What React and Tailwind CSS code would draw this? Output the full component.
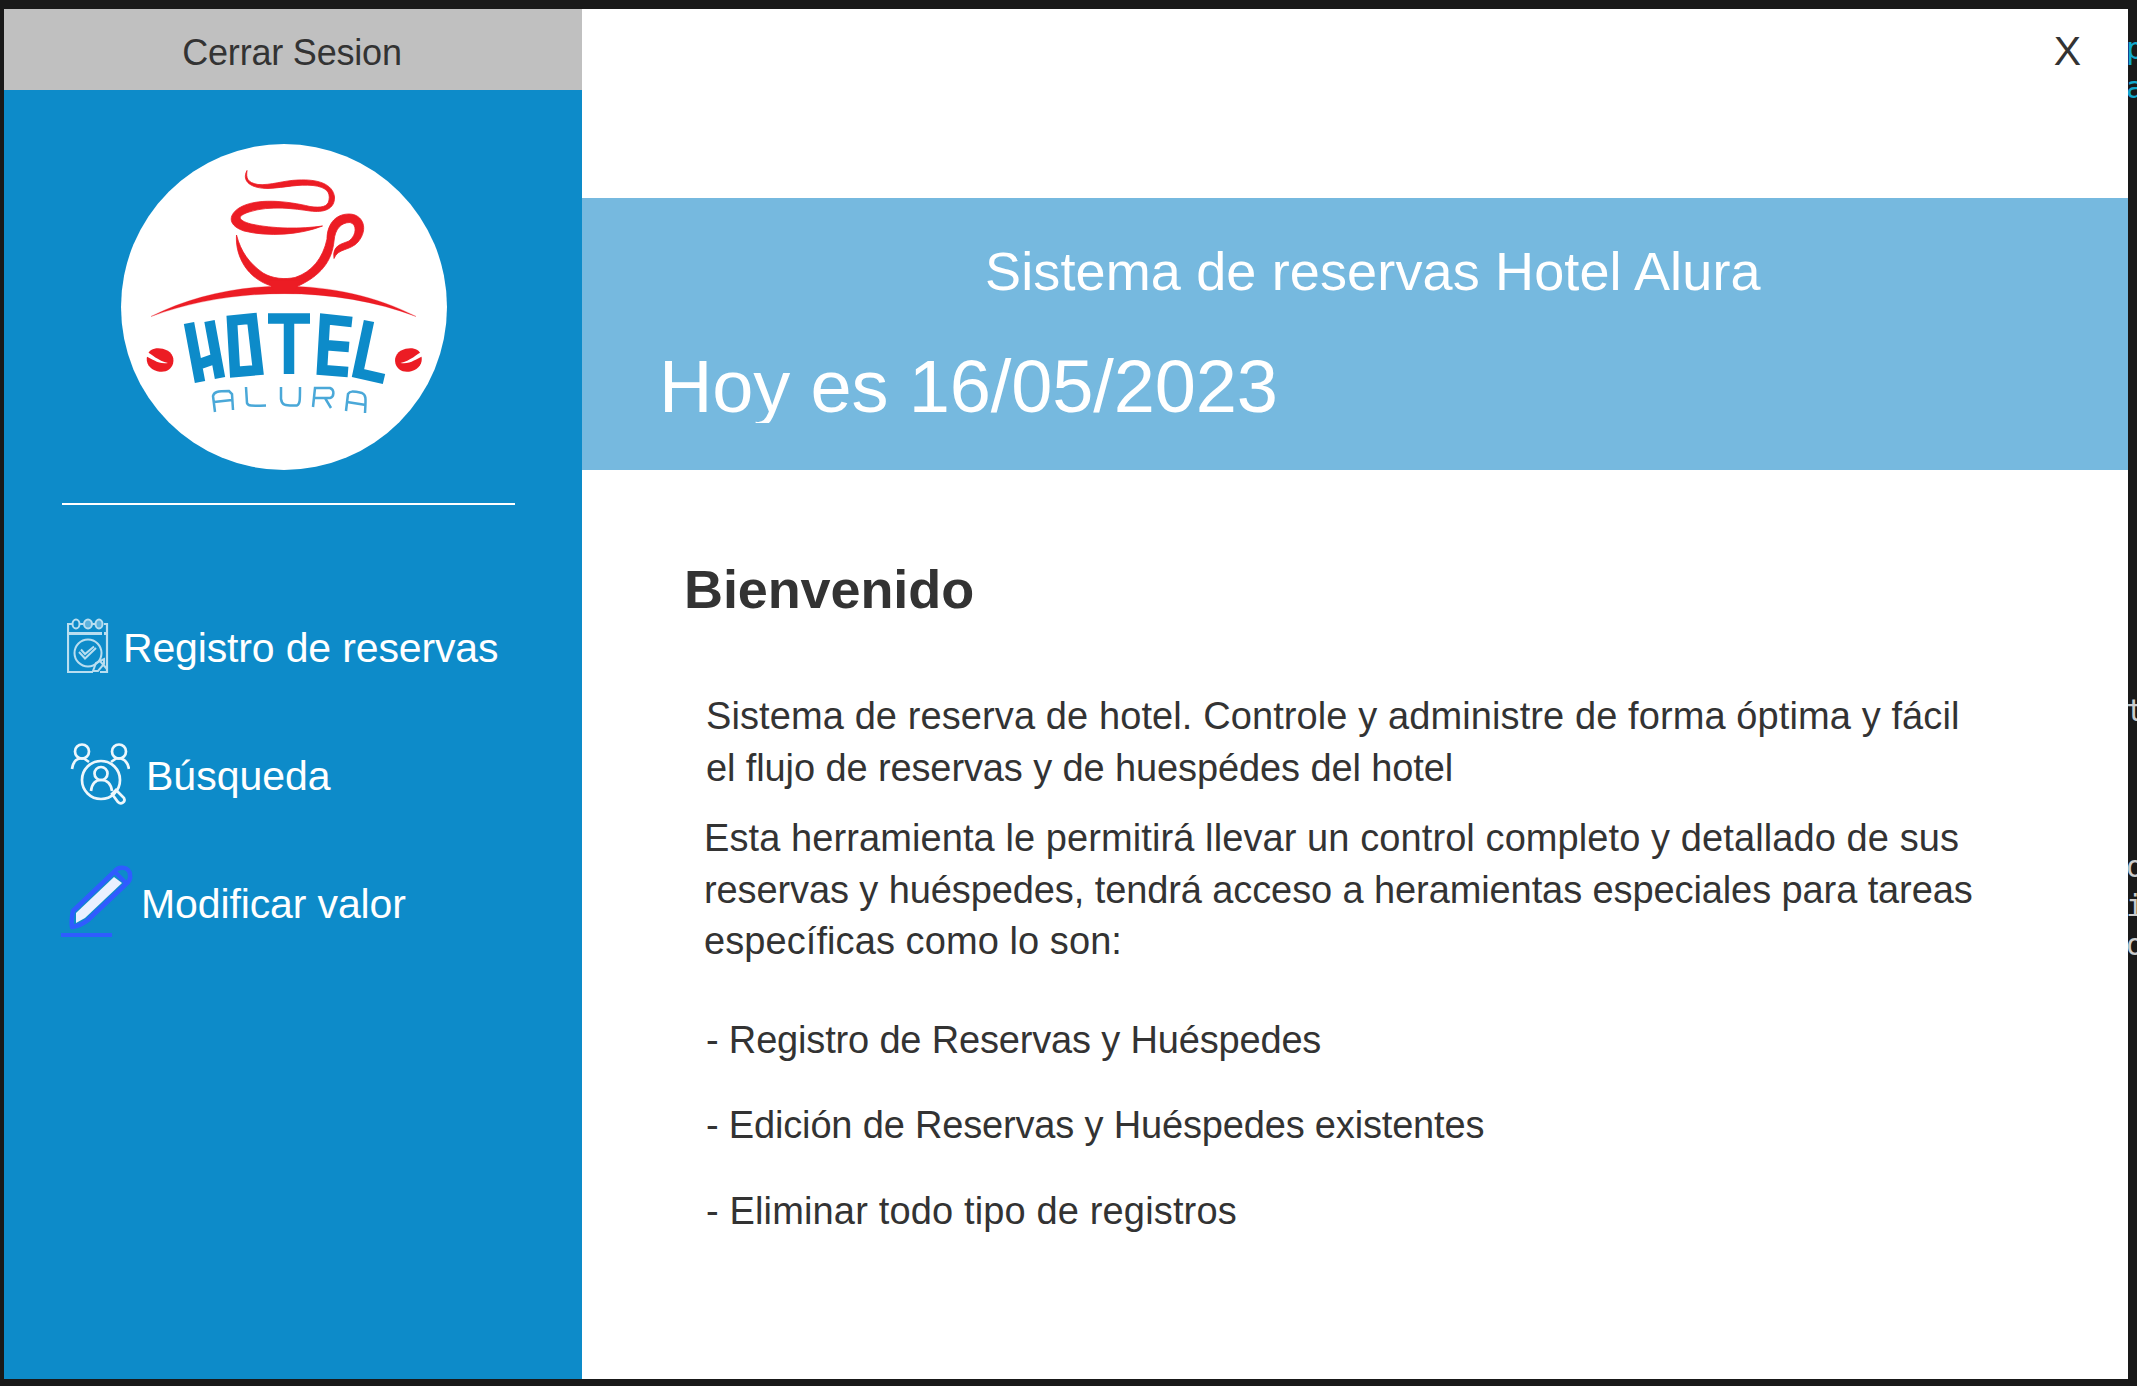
const SANS = "font-['Liberation_Sans',Arial,sans-serif]";

function Line({ className = "", children }) {
  return <p className={"whitespace-pre " + className}>{children}</p>;
}

function Bean() {
  return (
    <g>
      <path d="M-13.5 -1C-13.5 -8 -7 -11.5 0 -11.5C8 -11.5 13.5 -7 13.5 0C13.5 7 8 11.5 0 11.5C-8 11.5 -13.5 6.500 -13.500 -1Z" fill="#ec1c24" transform="rotate(14)" />
      <path d="M-15 -9C-8 -6 -2 1 8 3C-2 4.500 -7 -1 -15 -4Z" fill="#fff" />
    </g>
  );
}

function Logo() {
  return (
    <svg viewBox="0 0 350 350" className="block h-[350px] w-[350px]" fill="none">
      <circle cx="174" cy="177" r="163" fill="#fff" />
      <g fill="#ec1c24" stroke="#ec1c24" strokeWidth="0.800" strokeLinejoin="round">
        <path d="M137 40.500C131 52 142 58.500 158 58.500C176 57.500 188 54 203 55.500C216 57 220.500 62 219 70C218 77 211 78 200 76.500C177 71 146 67.500 129 78C117 86 119 96 134 101C158 107 190 105 212.500 96C192 99 163 99 141 94C127 90 127 86 139 82C160 75 186 79 200 81C214 83 225 79 224.500 67C223 54 208 49 188 50C173 50.500 161 55.500 148 54.500C137 52.500 136 48 137 40.500Z" />
        <path d="M126.500 105C125 126 137 149 163 156.500L186 157C211 146 222 131 224 111C225 99 231 92.500 240 92.500C247 94 247 105 239 111C232 114 222 115 224 128.500C228 118 240 121 248 112C259 99 253 84 239 84C224 84 217 96 217 109C213 128 202 142 185 147.500C175 149.500 163 149 153 143C139 133 131 122 126.500 105Z" />
        <path d="M41 186.500C121 146 227 146 306 186.500C226 156 123 156 41 186.500Z" strokeWidth="0.300" />
        <path d="M158 150H190L184 163H165Z" />
      </g>
      <g transform="translate(50 230)"><Bean /></g>
      <g transform="translate(298.500 230) scale(-1 1)"><Bean /></g>
      <g stroke="#0d8bc9" strokeWidth="10.500" strokeLinejoin="miter">
        <path d="M79 193L90 252M99.500 191L110 248M87 235L104 229" />
        <path d="M122 190.500L142 188.500L148 240L125 242Z" />
        <path d="M158 188.500H200M179 188V244" />
        <path d="M242 192L215 189L212 240L238 242M214 215L239 217" />
        <path d="M259 191L248 243L274 249" />
      </g>
      <g stroke="#4aa8d8" strokeWidth="2.500">
        <path d="M105 282L103 266C104 262 107 261 119 261L122 264L123 280M104 272L122 270" />
        <path d="M136 257L137 273C138 276 140 276 156 275.500" />
        <path d="M171 257V269C172 275 174 276 187 275.500C190 274 190 271 190 257" />
        <path d="M203 277L205 258H220C225 260 224 267 220 268H205M215 268L221 278" />
        <path d="M236 281L238 264C240 261 242 261 252 263C256 265 256 267 255 283M237 272L256 275" />
      </g>
    </svg>
  );
}

function CalendarIcon() {
  return (
    <svg viewBox="0 0 42 56" className="block h-[56px] w-[42px]" fill="none" stroke="#b9def0" strokeWidth="2.200">
      <path d="M5 6H1V54H26M33 54H40V6H37M13 6H16M25 6H28" />
      <path d="M1 15.500H35M37 15.500H40" strokeWidth="2.800" />
      <ellipse cx="9" cy="6" rx="3.500" ry="4.500" strokeWidth="2" />
      <ellipse cx="21" cy="6" rx="4" ry="4.500" fill="#5db2dd" strokeWidth="2" />
      <ellipse cx="32" cy="6" rx="3.500" ry="4.500" fill="#5db2dd" strokeWidth="2" />
      <circle cx="21" cy="35" r="13.500" strokeWidth="2" />
      <path d="M12 34L18 40.500L29 30M14 31.500L18 36L27 28.500" strokeWidth="2" />
      <path d="M26 53L29 45L37 41V46L31 53ZM33 43L40 51" strokeWidth="2" />
    </svg>
  );
}

function SearchPeopleIcon() {
  return (
    <svg viewBox="0 0 60 64" className="block h-[64px] w-[60px]" fill="none" stroke="#edf7fc" strokeWidth="2.700">
      <circle cx="12" cy="9.500" r="7" />
      <circle cx="49" cy="9.500" r="7" />
      <path d="M2 27C3 20 6 17 10 16.500H14L19 20M41 20L46 16.500H51C56 18 58 21 59 27" />
      <circle cx="31" cy="38" r="19" />
      <circle cx="31" cy="31.500" r="6.500" />
      <path d="M21 49C22 41 26 38 31 38C37 38 41 42 42 49" />
      <path d="M42 52L46 48L54 56C56 60 51 63 48 60Z" />
    </svg>
  );
}

function PencilIcon() {
  return (
    <svg viewBox="0 0 74 76" className="block h-[76px] w-[74px]" fill="none" stroke="#2f5cff" strokeWidth="4.500">
      <path d="M12 47L53 8C58 1 69 3 69 11C70 15 68 18 64 21L27 56C22 60 17 62 11 63C10 58 11 52 12 47Z" strokeLinejoin="round" />
      <path d="M15 49L53 13L61 19L24 54L15 59Z" fill="#eaf1ff" stroke="none" />
      <path d="M54 8L65 19" strokeWidth="4" />
      <path d="M0 71H51" strokeWidth="4" />
    </svg>
  );
}

function Sidebar() {
  return (
    <aside className="flex h-[1370px] w-[578px] shrink-0 flex-col bg-[#0d8bc9]">
      <button className="h-[81px] w-full bg-[#c0c0c0] pr-[2px] pt-[6px] text-[36px] leading-[75px] tracking-[-0.2px] text-[#333]">Cerrar Sesion</button>
      <div className="mt-[40px] pl-[106px]"><Logo /></div>
      <div className="ml-[58px] mt-[23px] h-[2px] w-[453px] bg-white" />
      <nav className="mt-[77px] text-[41px] leading-[128px] text-white">
        <div className="flex h-[128px] items-center pl-[63px]">
          <CalendarIcon />
          <Line className="ml-[14px] pt-[3px] tracking-[-0.15px]">Registro de reservas</Line>
        </div>
        <div className="flex h-[128px] items-center pl-[66px]">
          <SearchPeopleIcon />
          <Line className="ml-[16px] pt-[3px]">Búsqueda</Line>
        </div>
        <div className="flex h-[128px] items-center pl-[57px]">
          <PencilIcon />
          <Line className="ml-[6px] pt-[3px] tracking-[-0.12px]">Modificar valor</Line>
        </div>
      </nav>
    </aside>
  );
}

export default function App() {
  return (
    <div className={"flex h-[1386px] w-[2137px] overflow-hidden bg-[#191919] pl-[4px] pt-[9px] " + SANS}>
      <Sidebar />
      <main className="h-[1370px] w-[1546px] shrink-0 bg-white text-[#333]">
        <div className="flex h-[189px] justify-end pr-[47px] pt-[12px]">
          <button className="h-[60px] text-[41px] leading-[60px]">X</button>
        </div>
        <header className="h-[272px] bg-[#76b9df] pt-[37px] text-white">
          <Line className="h-[72px] pl-[403px] text-[54px] leading-[72px] tracking-[0.14px]">Sistema de reservas Hotel Alura</Line>
          <Line className="mt-[38px] h-[78px] overflow-hidden pl-[77px] text-[74px] leading-[84px] tracking-[-0.15px]">Hoy es 16/05/2023</Line>
        </header>
        <h1 className="ml-[102px] mt-[84px] text-[54px] font-bold leading-[70px] tracking-[-0.1px]">Bienvenido</h1>
        <div className="ml-[124px] mt-[66px] text-[38px] leading-[52px]">
          <Line className="tracking-[0.1px]">Sistema de reserva de hotel. Controle y administre de forma óptima y fácil</Line>
          <Line className="tracking-[-0.11px]">el flujo de reservas y de huespédes del hotel</Line>
        </div>
        <div className="ml-[122px] mt-[19px] text-[38px] leading-[51.500px]">
          <Line className="tracking-[0.09px]">Esta herramienta le permitirá llevar un control completo y detallado de sus</Line>
          <Line className="tracking-[-0.1px]">reservas y huéspedes, tendrá acceso a heramientas especiales para tareas</Line>
          <Line className="tracking-[0.08px]">específicas como lo son:</Line>
        </div>
        <ul className="ml-[124px] mt-[30px] text-[38px] leading-[85.500px]">
          <li className="whitespace-pre tracking-[-0.17px]">- Registro de Reservas y Huéspedes</li>
          <li className="whitespace-pre tracking-[-0.17px]">- Edición de Reservas y Huéspedes existentes</li>
          <li className="whitespace-pre tracking-[0.15px]">- Eliminar todo tipo de registros</li>
        </ul>
      </main>
      <aside className="-mt-[9px] flex h-[1386px] w-[9px] shrink-0 flex-col overflow-hidden indent-[-2px] font-['DejaVu_Sans_Mono',monospace] text-[30px] leading-[39px] text-[#cccccc]">
        <div className="pt-[29px] text-[#11a8cd]">
          <p>p</p>
          <p>a</p>
        </div>
        <p className="mt-[584px]">t</p>
        <div className="mt-[117px]">
          <p>o</p>
          <p>i</p>
          <p>o</p>
        </div>
      </aside>
    </div>
  );
}
